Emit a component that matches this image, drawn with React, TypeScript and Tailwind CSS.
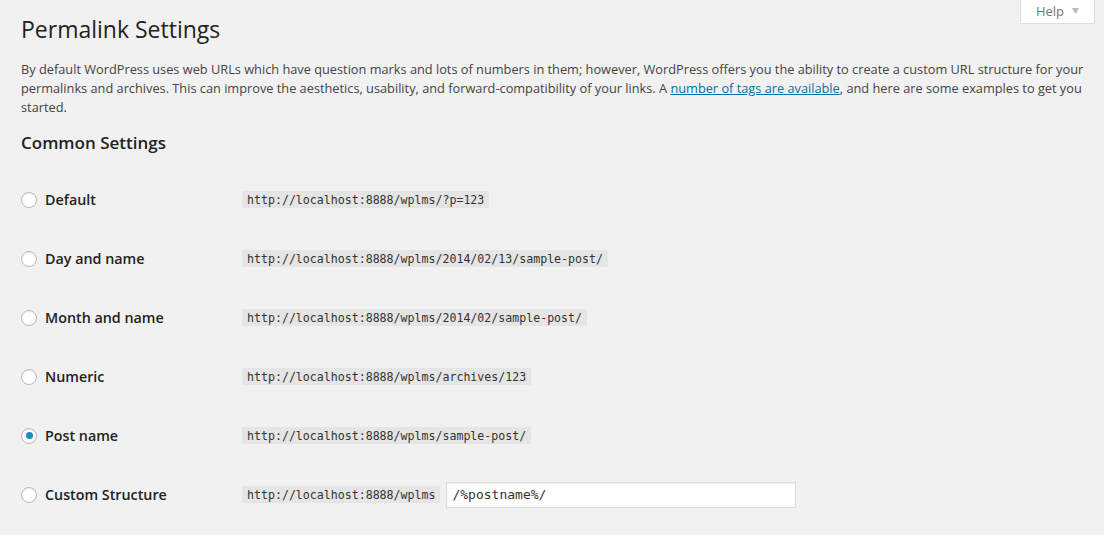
import React from "react";

const rows = [
  { label: "Default", url: "http://localhost:8888/wplms/?p=123" },
  { label: "Day and name", url: "http://localhost:8888/wplms/2014/02/13/sample-post/" },
  { label: "Month and name", url: "http://localhost:8888/wplms/2014/02/sample-post/" },
  { label: "Numeric", url: "http://localhost:8888/wplms/archives/123" },
  { label: "Post name", url: "http://localhost:8888/wplms/sample-post/", checked: true },
];

function Radio({ checked }: { checked?: boolean }) {
  return (
    <span className="flex h-[16px] w-[16px] shrink-0 items-center justify-center rounded-full border border-[#b4b9be] bg-white shadow-[inset_0_1px_2px_rgba(0,0,0,0.07)]">
      {checked && <span className="h-[7px] w-[7px] rounded-full bg-[#1e8cbe]" />}
    </span>
  );
}

const mono = "font-['DejaVu_Sans_Mono',monospace]";

export default function App() {
  return (
    <div className="relative min-h-[535px] w-full bg-[#f1f1f1] font-['Open_Sans',sans-serif] text-[#444]">
      <div className="absolute right-[9px] top-0 flex h-[24px] w-[75px] items-center justify-center gap-[8px] border border-t-0 border-[#dfdfdf] bg-white text-[13px] text-[#72777c]">
        <span className="leading-none">Help</span>
        <svg width="7" height="6" viewBox="0 0 7 6" className="mt-[-1px]">
          <polygon points="0,0 7,0 3.5,6" fill="#bbb" />
        </svg>
      </div>

      <div className="pl-[21px] pr-[10px] pt-[15px]">
        <h1 className="text-[23px] font-normal leading-[29px] text-[#222]">Permalink Settings</h1>
        <p className="mt-[16px] text-[12.77px] leading-[19px]">
          By default WordPress uses web URLs which have question marks and lots of numbers in them; however, WordPress offers you the ability to create a custom URL structure for your permalinks and archives. This can improve the aesthetics, usability, and forward-compatibility of your links. A{" "}
          <a className="text-[#0074a2] underline">number of tags are available</a>, and here are some examples to get you started.
        </p>
        <h3 className="mt-[15px] text-[17px] font-semibold leading-[22px] text-[#222]">Common Settings</h3>

        <div className="mt-[16px] flex flex-col">
          {rows.map((r) => (
            <div key={r.label} className="flex h-[59px] items-center">
              <div className="flex w-[221px] items-center gap-[8px]">
                <Radio checked={r.checked} />
                <span className="text-[14.3px] font-semibold text-[#222]">{r.label}</span>
              </div>
              <code className={`${mono} bg-[#e5e5e5] px-[5px] pb-[2px] pt-[3px] text-[11.6px] leading-[12px] text-[#333]`}>
                {r.url}
              </code>
            </div>
          ))}
          <div className="flex h-[59px] items-center">
            <div className="flex w-[221px] items-center gap-[8px]">
              <Radio />
              <span className="text-[14.3px] font-semibold text-[#222]">Custom Structure</span>
            </div>
            <code className={`${mono} bg-[#e5e5e5] px-[5px] pb-[2px] pt-[3px] text-[11.6px] leading-[12px] text-[#333]`}>
              http://localhost:8888/wplms
            </code>
            <div
              className={`${mono} ml-[6px] flex h-[26px] w-[350px] items-center border border-[#ddd] bg-white px-[5px] text-[13px] text-[#333] shadow-[inset_0_1px_2px_rgba(0,0,0,0.07)]`}
            >
              /%postname%/
            </div>
          </div>
        </div>
      </div>
    </div>
  );
}
